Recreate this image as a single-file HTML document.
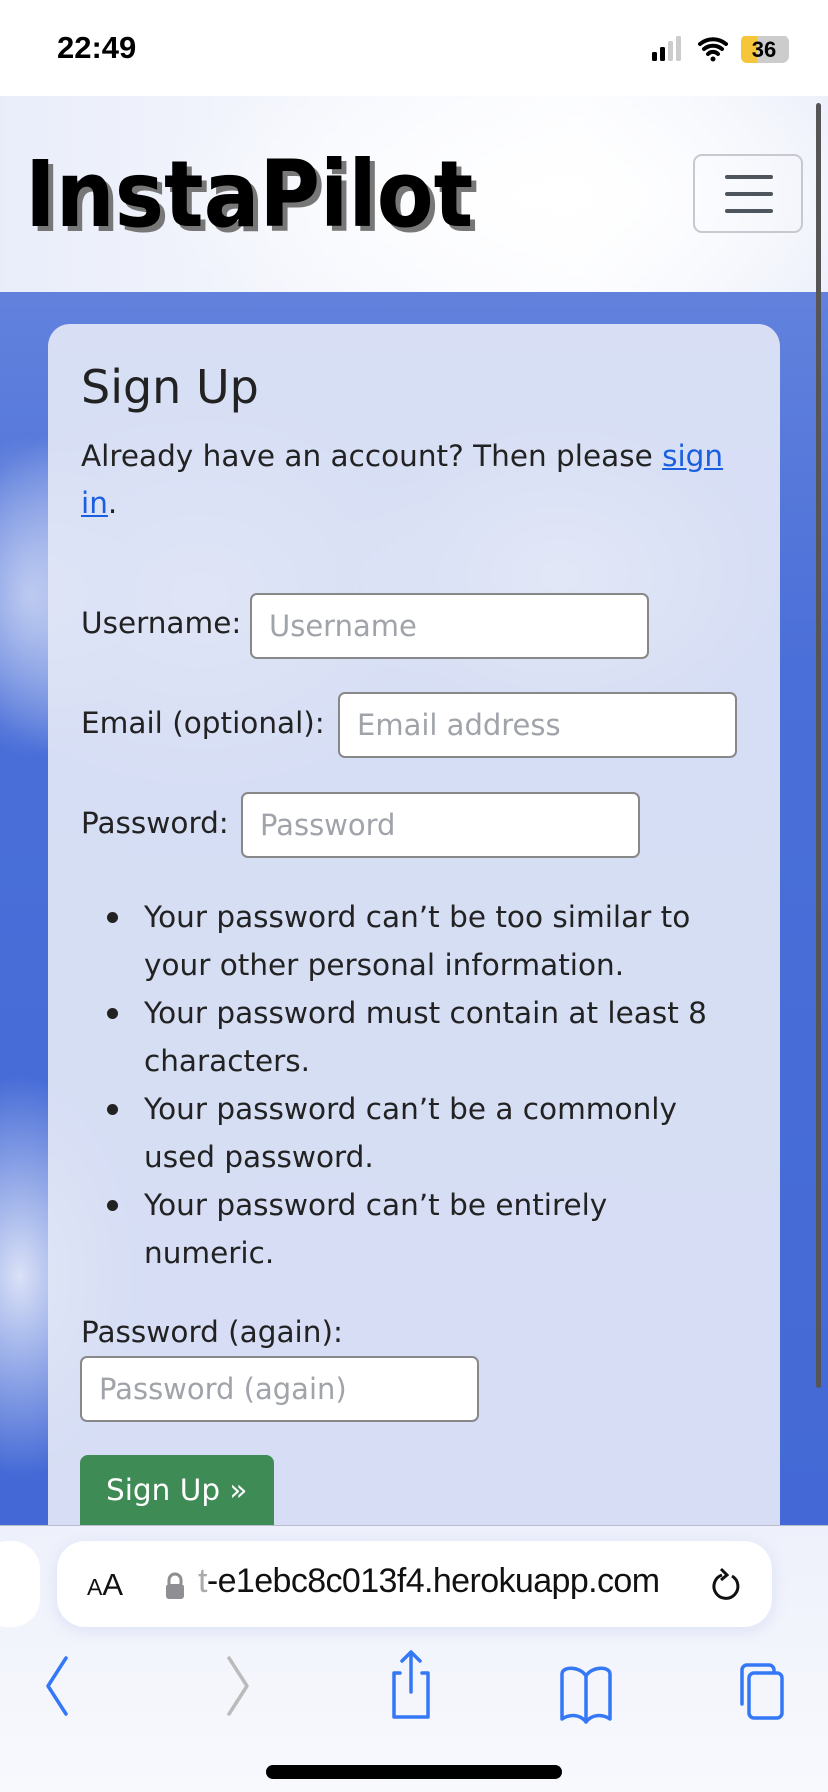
<!DOCTYPE html>
<html><head><meta charset="utf-8"><style>
*{margin:0;padding:0;box-sizing:border-box}
body{width:828px;height:1792px;overflow:hidden;position:relative;font-family:"DejaVu Sans","Liberation Sans",sans-serif;background:#fff}
.status{position:absolute;top:0;left:0;width:828px;height:96px;background:#fff}
.time{position:absolute;left:57px;top:30px;font:bold 31px "Liberation Sans",sans-serif;color:#000}
.sky{position:absolute;top:96px;left:0;width:828px;height:1430px;
background:
radial-gradient(ellipse 220px 160px at 560px 480px,rgba(255,255,255,.9),transparent),
radial-gradient(ellipse 260px 200px at 200px 500px,rgba(255,255,255,.7),transparent),
radial-gradient(ellipse 120px 200px at 20px 1180px,rgba(255,255,255,.8),transparent),
radial-gradient(ellipse 100px 160px at 30px 500px,rgba(255,255,255,.5),transparent),
linear-gradient(#6f8be0,#4a6fd8 40%,#4469d6)}
.head{position:absolute;top:96px;left:0;width:828px;height:196px;
background:radial-gradient(ellipse 400px 150px at 550px 100px,#fff,rgba(255,255,255,.6)),linear-gradient(90deg,#c9d3f2,#e6ebfa 40%,#f6f8fe 70%,#cfd8f3)}
.title{position:absolute;left:25px;top:140px;font:bold 92px "DejaVu Sans Condensed","DejaVu Sans",sans-serif;color:#000;text-shadow:5px 5px 0 #777;letter-spacing:0px;line-height:110px}
.burger{position:absolute;left:693px;top:154px;width:110px;height:79px;border:2px solid #c6c9d2;border-radius:9px}
.burger i{position:absolute;left:30px;width:48px;height:4px;background:#4f555c;border-radius:2px}
.scroll{position:absolute;left:816px;top:103px;width:5px;height:1285px;background:#555;border-radius:3px}
.card{position:absolute;left:48px;top:324px;width:732px;height:1300px;background:rgba(225,230,246,.93);border-radius:22px}
h1{position:absolute;left:81px;top:360px;font-weight:normal;font-size:46px;color:#222;font-family:"DejaVu Sans",sans-serif}
.p{position:absolute;left:81px;top:433px;font-size:29.5px;line-height:47px;color:#222;width:660px}
a{color:#1a5fe0}
.lbl{position:absolute;font-size:29.5px;color:#222}
.in{position:absolute;background:#fff;border:2px solid #888;border-radius:7px;height:66px;font-size:29px;color:#a0a4aa;padding:14px 17px}
ul{position:absolute;left:144px;top:893px;font-size:29.5px;line-height:48px;color:#222;width:600px;list-style:none}
ul li{position:relative}
ul li:before{content:"";position:absolute;left:-37px;top:19px;width:11px;height:11px;background:#222;border-radius:50%}
.btn{position:absolute;left:80px;top:1455px;width:194px;height:80px;background:#3f8b55;border-radius:8px;color:#fff;font-size:29.5px;padding:18px 26px}
.bar{position:absolute;top:1525px;left:0;width:828px;height:267px;background:linear-gradient(#eef1fb,#f8f9fd);border-top:1px solid #b8bccb}
.url{position:absolute;left:57px;top:1541px;width:715px;height:86px;background:#fff;border-radius:28px;box-shadow:0 4px 16px rgba(100,120,200,.15)}
.tab{position:absolute;left:-20px;top:1541px;width:60px;height:86px;background:#fff;border-radius:28px}
.urlt{position:absolute;left:198px;top:1562px;font:34px "Liberation Sans",sans-serif;color:#111;letter-spacing:-.6px}
.home{position:absolute;left:266px;top:1765px;width:296px;height:14px;background:#000;border-radius:7px}
</style></head><body>
<div class="status"><div class="time">22:49</div>
<svg style="position:absolute;left:652px;top:36px" width="140" height="30">
<rect x="0" y="16" width="5" height="9" rx="1.5" fill="#000"/><rect x="8" y="11" width="5" height="14" rx="1.5" fill="#000"/><rect x="16" y="5" width="5" height="20" rx="1.5" fill="#ccc"/><rect x="24" y="0" width="5" height="25" rx="1.5" fill="#ccc"/>
<path d="M48 8 a20 20 0 0 1 26 0 M52 13 a14 14 0 0 1 18 0 M56 18 a7 7 0 0 1 10 0" stroke="#000" stroke-width="4" fill="none" stroke-linecap="round"/><circle cx="61" cy="23" r="2.5" fill="#000"/>
<rect x="89" y="-1" width="48" height="28" rx="7" fill="#ccc"/><rect x="89" y="-1" width="16" height="28" fill="#f5c53a" rx="6"/><rect x="96" y="-1" width="9" height="28" fill="#f5c53a"/>
<text x="112" y="21" text-anchor="middle" font-family="Liberation Sans" font-weight="bold" font-size="22" fill="#000">36</text></svg>
</div>
<div class="sky"></div>
<div class="head"></div>
<div class="title">InstaPilot</div>
<div class="burger"><i style="top:19px"></i><i style="top:36px"></i><i style="top:53px"></i></div>
<div class="scroll"></div>
<div class="card"></div>
<h1>Sign Up</h1>
<div class="p">Already have an account? Then please <a href="#">sign</a><br><a href="#">in</a>.</div>
<div class="lbl" style="left:81px;top:606px">Username:</div><div class="in" style="left:250px;top:593px;width:399px">Username</div>
<div class="lbl" style="left:81px;top:706px">Email (optional):</div><div class="in" style="left:338px;top:692px;width:399px">Email address</div>
<div class="lbl" style="left:81px;top:806px">Password:</div><div class="in" style="left:241px;top:792px;width:399px">Password</div>
<ul><li>Your password can’t be too similar to your other personal information.</li><li>Your password must contain at least 8 characters.</li><li>Your password can’t be a commonly used password.</li><li>Your password can’t be entirely numeric.</li></ul>
<div class="lbl" style="left:81px;top:1315px">Password (again):</div><div class="in" style="left:80px;top:1356px;width:399px">Password (again)</div>
<div class="btn">Sign Up »</div>
<div class="bar"></div>
<div class="tab"></div>
<div class="url"></div>
<div style="position:absolute;left:87px;top:1567px;font:31px 'Liberation Sans',sans-serif;color:#111"><span style="font-size:23px">A</span>A</div>
<svg style="position:absolute;left:165px;top:1572px" width="20" height="28"><path d="M4 12v-4a6 6 0 0 1 12 0v4" stroke="#8e8e93" stroke-width="3" fill="none"/><rect x="1" y="12" width="18" height="15" rx="3" fill="#8e8e93"/></svg>
<div class="urlt"><span style="color:#aaa">t</span>-e1ebc8c013f4.herokuapp.com</div>
<svg style="position:absolute;left:710px;top:1566px" width="34" height="40"><path d="M22 10a12 12 0 1 1-10-1" stroke="#111" stroke-width="3" fill="none"/><path d="M11 3l6 6-6 5" stroke="#111" stroke-width="3" fill="none"/></svg>
<svg style="position:absolute;left:0;top:1640px" width="828" height="90" fill="none" stroke-linecap="round" stroke-linejoin="round" stroke-width="3.5">
<path d="M66 18l-18 28 18 28" stroke="#3478f6"/>
<path d="M229 18l18 28-18 28" stroke="#bbb"/>
<path d="M400 33h-6v44h34v-44h-6M411 12v40M402 21l9-9 9 9" stroke="#3478f6"/>
<path d="M586 82v-46c-6-10-24-10-24-2v45c8-5 18-5 24 3c6-8 16-8 24-3v-45c0-8-18-8-24 2" stroke="#3478f6"/>
<rect x="749" y="33" width="33" height="45" rx="5" stroke="#3478f6"/><path d="M742 64v-34a5 5 0 0 1 5-5h22a5 5 0 0 1 5 5v3" stroke="#3478f6"/>
</svg>
<div class="home"></div>
</body></html>
